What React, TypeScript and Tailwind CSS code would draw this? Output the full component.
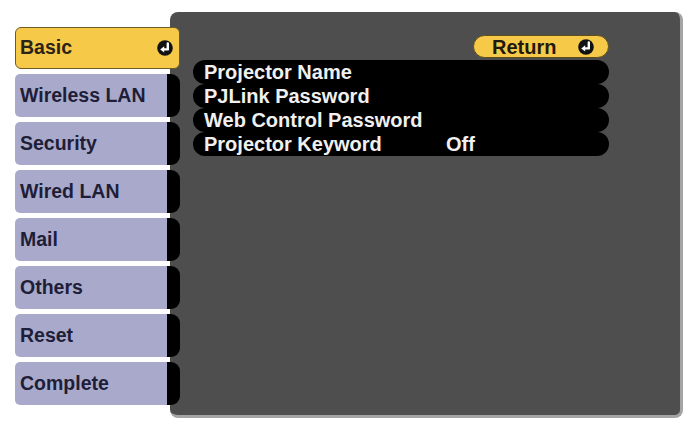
import React from "react";

const font = { fontFamily: '"Liberation Sans", Arial, sans-serif' };

function EnterIcon({ size = 16 }: { size?: number }) {
  return (
    <svg width={size} height={size} viewBox="0 0 16 16">
      <circle cx="8" cy="8" r="7.8" fill="#121212" />
      <path d="M10.8 3.4 V9.4 H6.6" fill="none" stroke="#fff" strokeWidth="2.4" strokeLinecap="round" strokeLinejoin="round" />
      <path d="M3.2 9.4 L7.2 6.3 L7.2 12.5 Z" fill="#fff" />
    </svg>
  );
}

const tabs = ["Wireless LAN", "Security", "Wired LAN", "Mail", "Others", "Reset", "Complete"];

const rows: [string, string][] = [
  ["Projector Name", ""],
  ["PJLink Password", ""],
  ["Web Control Password", ""],
  ["Projector Keyword", "Off"],
];

export default function App() {
  return (
    <div className="w-[687px] h-[425px] bg-white flex items-start pt-[12px] pl-[15px] overflow-hidden" style={font}>
      <div className="relative z-10 mt-[15px] flex flex-col gap-[5px] w-[165px]">
        <div className="h-[42px] w-[165px] rounded-[6px] border-[1.5px] border-[#6f5c22] bg-[#f7c948] flex items-center justify-between pl-[4px] pr-[6px]">
          <span className="text-[19.5px] font-bold text-[#2a2418] leading-none">Basic</span>
          <EnterIcon size={16} />
        </div>
        {tabs.map((t) => (
          <div key={t} className="flex h-[43px]">
            <div className="w-[152px] h-full bg-[#a9a9cb] rounded-l-[5px] flex items-center pl-[5px]">
              <span className="text-[19.5px] font-bold text-[#1e1e38] leading-none">{t}</span>
            </div>
            <div className="w-[13px] h-full bg-black rounded-r-[9px]" />
          </div>
        ))}
      </div>
      <div className="ml-[-10px] w-[513px] h-[406px] bg-[#4e4e4e] rounded-[8px] border-r-[3px] border-b-[3px] border-[#a4a4a4] pt-[23px] pl-[23px]">
        <div className="w-[416px] flex flex-col">
          <div className="self-end w-[136px] h-[23px] rounded-full border-[1.5px] border-[#5e4e1c] bg-[#f7c948] flex items-center pl-[18px] gap-[22px]">
            <span className="text-[20px] font-bold text-[#1e1a10] leading-none">Return</span>
            <EnterIcon size={16} />
          </div>
          <div className="mt-[2px] flex flex-col">
            {rows.map(([l, v]) => (
              <div key={l} className="h-[24px] bg-black rounded-full flex items-center pl-[11px]">
                <span className="w-[242px] text-[20px] font-bold text-[#f0f0f0] leading-none">{l}</span>
                <span className="text-[20px] font-bold text-[#f0f0f0] leading-none">{v}</span>
              </div>
            ))}
          </div>
        </div>
      </div>
    </div>
  );
}
